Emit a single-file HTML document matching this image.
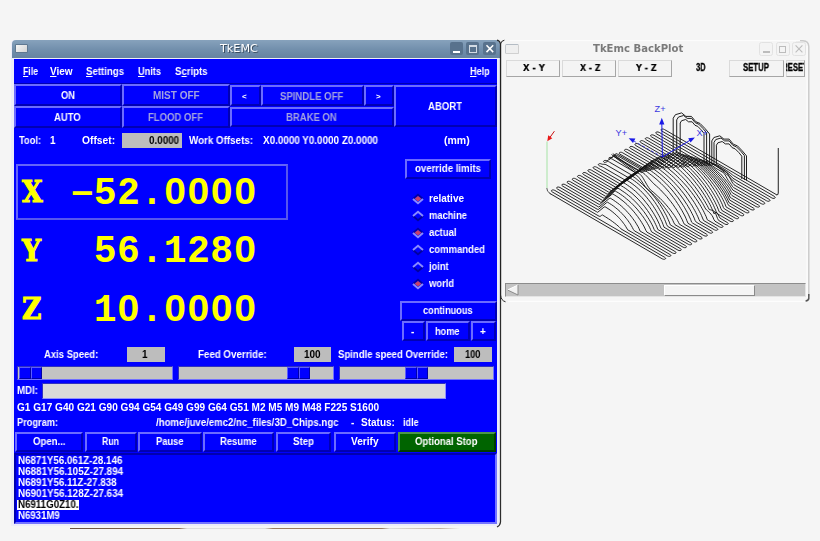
<!DOCTYPE html><html><head><meta charset="utf-8"><title>TkEMC</title><style>
html,body{margin:0;padding:0}
body{width:820px;height:541px;background:#f5f5f5;position:relative;overflow:hidden;font-family:"Liberation Sans",sans-serif;font-weight:bold;font-size:10px;color:#fff}
.a{position:absolute;box-sizing:border-box;white-space:nowrap}
.btn{position:absolute;box-sizing:border-box;background:#0000ff;border:2px solid;border-color:#6c6cff #0000b4 #0000b4 #6c6cff;text-align:center;white-space:nowrap;overflow:hidden}
.dis{color:#a3a3e0}
.val{position:absolute;box-sizing:border-box;background:#bdbdbd;color:#000;text-align:center}
.tr{position:absolute;box-sizing:border-box;background:#c3c3c3;border:1px solid;border-color:#3030c0 #7070ff #7070ff #3030c0}
.sl{position:absolute;box-sizing:border-box;background:#0000ff;border:1px solid;border-color:#5c5cff #0000a8 #0000a8 #5c5cff}
.big{position:absolute;font-family:"Liberation Mono",monospace;font-weight:bold;font-size:38px;color:#ffff00;white-space:pre;line-height:40px;letter-spacing:0.5px}
.ax{position:absolute;font-family:"DejaVu Serif",serif;font-weight:bold;font-size:29.5px;color:#ffff00;line-height:32px;transform:scaleX(0.9);transform-origin:0 0;-webkit-text-stroke:1.1px #ffff00}
.hy{display:inline-block;position:relative;top:-1.2px;transform:scale(1.78,0.82);transform-origin:50% 60%}
.t{position:absolute;white-space:pre;line-height:12px;transform-origin:0 0;will-change:transform}
.rb{position:absolute;box-sizing:border-box;background:#f4f4f4;border:1px solid;border-color:#dadada #a6a6a6 #a6a6a6 #dadada;color:#000;text-align:center;overflow:hidden;white-space:nowrap}
u{text-decoration:underline}
</style></head><body>
<div class="a" style="left:11px;top:40px;width:489px;height:486px;background:#ececfa;border-radius:4px 4px 4px 0"></div>
<div class="a" style="left:11.5px;top:40px;width:488.5px;height:18px;background:linear-gradient(#87a2bc,#7390ad 50%,#6583a1);border-radius:4px 4px 0 0"></div>
<div class="a" style="left:15px;top:44px;width:13px;height:9px;background:linear-gradient(135deg,#f6f6f6,#d4d4d4);border:1px solid #5f7891;border-radius:1px"></div>
<div class="t" style="left:219.5px;top:41.6px;font-family:'DejaVu Sans',sans-serif;font-weight:normal;font-size:11.2px;color:#fff;text-shadow:1px 1px 0 #3d4f62;line-height:14px">TkEMC</div>
<div class="a" style="left:449.7px;top:42.2px;width:13.3px;height:13.3px;background:#58728d;border-radius:2px"></div>
<div class="a" style="left:466.1px;top:42.2px;width:13.3px;height:13.3px;background:#58728d;border-radius:2px"></div>
<div class="a" style="left:482.8px;top:42.2px;width:13.3px;height:13.3px;background:#58728d;border-radius:2px"></div>
<div class="a" style="left:453px;top:50.6px;width:7px;height:2px;background:#fff"></div>
<div class="a" style="left:469px;top:45px;width:8px;height:8px;border:1px solid #d2dbe4;border-top-width:2px"></div>
<svg class="a" style="left:482.5px;top:42px" width="14" height="14"><path d="M3.5 3.3L10.2 10.1M10.2 3.3L3.5 10.1" stroke="#fff" stroke-width="1.5" fill="none"/></svg>
<div class="a" style="left:14px;top:58.7px;width:482.7px;height:464.8px;background:#0000ff"></div>
<div class="t " style="left:22.75px;top:66px;transform:scaleX(0.871);"><u>F</u>ile</div>
<div class="t " style="left:50.25px;top:66px;transform:scaleX(0.994);"><u>V</u>iew</div>
<div class="t " style="left:86.00px;top:66px;transform:scaleX(0.963);"><u>S</u>ettings</div>
<div class="t " style="left:137.75px;top:66px;transform:scaleX(0.920);"><u>U</u>nits</div>
<div class="t " style="left:174.50px;top:66px;transform:scaleX(0.959);">S<u>c</u>ripts</div>
<div class="t " style="left:469.50px;top:66px;transform:scaleX(0.911);"><u>H</u>elp</div>
<div class="a" style="left:14px;top:83px;width:483px;height:1px;background:#0000b4"></div>
<div class="btn " style="left:14px;top:84px;width:108px;height:22px;"></div>
<div class="t " style="left:60.50px;top:90.3px;transform:scaleX(0.933);">ON</div>
<div class="btn " style="left:14px;top:106px;width:108px;height:22px;"></div>
<div class="t " style="left:53.75px;top:111.8px;transform:scaleX(0.950);">AUTO</div>
<div class="btn " style="left:122px;top:84px;width:108px;height:22px;"></div>
<div class="t dis" style="left:152.50px;top:90.3px;transform:scaleX(0.991);">MIST OFF</div>
<div class="btn " style="left:122px;top:106px;width:108px;height:22px;"></div>
<div class="t dis" style="left:147.50px;top:111.8px;transform:scaleX(0.952);">FLOOD OFF</div>
<div class="btn " style="left:230px;top:85px;width:31px;height:21px;"></div>
<div class="t " style="left:242.31px;top:91.4px;transform:scaleX(1.000);font-size:8px;">&lt;</div>
<div class="btn " style="left:261px;top:85px;width:103px;height:21px;"></div>
<div class="t dis" style="left:280.00px;top:90.5px;transform:scaleX(0.957);">SPINDLE OFF</div>
<div class="btn " style="left:364px;top:85px;width:30px;height:21px;"></div>
<div class="t " style="left:375.61px;top:91.4px;transform:scaleX(1.000);font-size:8px;">&gt;</div>
<div class="btn " style="left:230px;top:107px;width:164px;height:20px;"></div>
<div class="t dis" style="left:286.25px;top:111.8px;transform:scaleX(0.951);">BRAKE ON</div>
<div class="btn " style="left:394px;top:85px;width:103px;height:42px;"></div>
<div class="t " style="left:428.00px;top:101.1px;transform:scaleX(0.956);">ABORT</div>
<div class="t " style="left:18.70px;top:135px;transform:scaleX(0.933);">Tool:</div>
<div class="t " style="left:49.72px;top:135px;transform:scaleX(1.000);">1</div>
<div class="t " style="left:81.80px;top:135px;transform:scaleX(1.027);">Offset:</div>
<div class="val" style="left:122px;top:133px;width:60px;height:15px"></div>
<div class="t " style="left:149.25px;top:135px;transform:scaleX(0.981);color:#000;">0.0000</div>
<div class="t " style="left:189.25px;top:135px;transform:scaleX(0.979);">Work Offsets:</div>
<div class="t " style="left:263.25px;top:135px;transform:scaleX(0.986);">X0.0000 Y0.0000 Z0.0000</div>
<div class="t " style="left:443.50px;top:135px;transform:scaleX(1.052);">(mm)</div>
<div class="a" style="left:16px;top:164px;width:272px;height:55.5px;border:2px solid;border-color:#6464f8 #5656ee #5656ee #6464f8"></div>
<div class="ax" style="left:21.5px;top:176.3px">X</div>
<div class="big" style="left:70.5px;top:173.5px"><span class="hy">-</span>52.0000</div>
<div class="a" style="left:172.6px;top:186.5px;width:5px;height:8px;background:#0000ff"></div>
<div class="a" style="left:195.9px;top:186.5px;width:5px;height:8px;background:#0000ff"></div>
<div class="a" style="left:219.2px;top:186.5px;width:5px;height:8px;background:#0000ff"></div>
<div class="a" style="left:242.5px;top:186.5px;width:5px;height:8px;background:#0000ff"></div>
<div class="ax" style="left:21.5px;top:234.8px">Y</div>
<div class="big" style="left:70.5px;top:232px"> 56.1280</div>
<div class="a" style="left:242.5px;top:245.0px;width:5px;height:8px;background:#0000ff"></div>
<div class="ax" style="left:21.5px;top:293.3px">Z</div>
<div class="big" style="left:70.5px;top:290.5px"> 10.0000</div>
<div class="a" style="left:126.0px;top:303.5px;width:5px;height:8px;background:#0000ff"></div>
<div class="a" style="left:172.6px;top:303.5px;width:5px;height:8px;background:#0000ff"></div>
<div class="a" style="left:195.9px;top:303.5px;width:5px;height:8px;background:#0000ff"></div>
<div class="a" style="left:219.2px;top:303.5px;width:5px;height:8px;background:#0000ff"></div>
<div class="a" style="left:242.5px;top:303.5px;width:5px;height:8px;background:#0000ff"></div>
<div class="btn " style="left:405px;top:159px;width:86px;height:20px;"></div>
<div class="t " style="left:414.60px;top:162.8px;transform:scaleX(0.964);">override limits</div>
<svg class="a" style="left:410.7px;top:192.7px" width="14" height="12"><path d="M2 6L7 1.7L12 6" stroke="#0000a6" stroke-width="1.7" fill="none"/><path d="M2 6L7 10.3L12 6" stroke="#8a8aff" stroke-width="1.9" fill="none"/><path d="M3.6 5.8L7 3L10.4 5.8L7 8.6Z" fill="#c8406a"/></svg>
<div class="t " style="left:428.60px;top:192.8px;transform:scaleX(0.991);">relative</div>
<svg class="a" style="left:410.7px;top:209.7px" width="14" height="12"><path d="M2 6L7 10.3L12 6" stroke="#0000a0" stroke-width="1.8" fill="none"/><path d="M2 6L7 1.7L12 6" stroke="#8a8aff" stroke-width="1.9" fill="none"/></svg>
<div class="t " style="left:428.60px;top:209.8px;transform:scaleX(0.934);">machine</div>
<svg class="a" style="left:410.7px;top:226.7px" width="14" height="12"><path d="M2 6L7 1.7L12 6" stroke="#0000a6" stroke-width="1.7" fill="none"/><path d="M2 6L7 10.3L12 6" stroke="#8a8aff" stroke-width="1.9" fill="none"/><path d="M3.6 5.8L7 3L10.4 5.8L7 8.6Z" fill="#c8406a"/></svg>
<div class="t " style="left:428.60px;top:226.8px;transform:scaleX(0.955);">actual</div>
<svg class="a" style="left:410.7px;top:243.7px" width="14" height="12"><path d="M2 6L7 10.3L12 6" stroke="#0000a0" stroke-width="1.8" fill="none"/><path d="M2 6L7 1.7L12 6" stroke="#8a8aff" stroke-width="1.9" fill="none"/></svg>
<div class="t " style="left:428.60px;top:243.8px;transform:scaleX(0.951);">commanded</div>
<svg class="a" style="left:410.7px;top:260.7px" width="14" height="12"><path d="M2 6L7 10.3L12 6" stroke="#0000a0" stroke-width="1.8" fill="none"/><path d="M2 6L7 1.7L12 6" stroke="#8a8aff" stroke-width="1.9" fill="none"/></svg>
<div class="t " style="left:428.75px;top:260.8px;transform:scaleX(0.927);">joint</div>
<svg class="a" style="left:410.7px;top:277.7px" width="14" height="12"><path d="M2 6L7 1.7L12 6" stroke="#0000a6" stroke-width="1.7" fill="none"/><path d="M2 6L7 10.3L12 6" stroke="#8a8aff" stroke-width="1.9" fill="none"/><path d="M3.6 5.8L7 3L10.4 5.8L7 8.6Z" fill="#c8406a"/></svg>
<div class="t " style="left:428.63px;top:277.8px;transform:scaleX(0.942);">world</div>
<div class="btn " style="left:400px;top:301.4px;width:97px;height:19.6px;"></div>
<div class="t " style="left:422.90px;top:305.2px;transform:scaleX(0.921);">continuous</div>
<div class="btn " style="left:402px;top:321.3px;width:23px;height:20px;"></div>
<div class="t " style="left:410.69px;top:325.8px;transform:scaleX(1.000);">-</div>
<div class="btn " style="left:426px;top:321.3px;width:44px;height:20px;"></div>
<div class="t " style="left:434.80px;top:325.8px;transform:scaleX(0.922);">home</div>
<div class="btn " style="left:471px;top:321.3px;width:25px;height:20px;"></div>
<div class="t " style="left:479.88px;top:325.8px;transform:scaleX(1.000);">+</div>
<div class="t " style="left:43.75px;top:349px;transform:scaleX(0.948);">Axis Speed:</div>
<div class="val" style="left:127px;top:347px;width:38px;height:15px"></div>
<div class="t " style="left:141.59px;top:349px;transform:scaleX(1.000);color:#000;">1</div>
<div class="t " style="left:197.50px;top:349px;transform:scaleX(0.974);">Feed Override:</div>
<div class="val" style="left:294px;top:347px;width:37px;height:15px"></div>
<div class="t " style="left:303.75px;top:349px;transform:scaleX(0.974);color:#000;">100</div>
<div class="t " style="left:338.00px;top:349px;transform:scaleX(0.956);">Spindle speed Override:</div>
<div class="val" style="left:454px;top:347px;width:38px;height:15px"></div>
<div class="t " style="left:465.00px;top:349px;transform:scaleX(0.929);color:#000;">100</div>
<div class="tr" style="left:17px;top:366px;width:156px;height:14px"></div>
<div class="sl" style="left:19px;top:367px;width:11.5px;height:12px"></div>
<div class="sl" style="left:30.5px;top:367px;width:11.5px;height:12px"></div>
<div class="tr" style="left:178px;top:366px;width:156px;height:14px"></div>
<div class="sl" style="left:287px;top:367px;width:11.5px;height:12px"></div>
<div class="sl" style="left:298.5px;top:367px;width:11.5px;height:12px"></div>
<div class="tr" style="left:339px;top:366px;width:155px;height:14px"></div>
<div class="sl" style="left:405px;top:367px;width:11.5px;height:12px"></div>
<div class="sl" style="left:416.5px;top:367px;width:11.5px;height:12px"></div>
<div class="t " style="left:17.00px;top:385px;transform:scaleX(0.970);">MDI:</div>
<div class="a" style="left:42px;top:383px;width:404px;height:15.5px;background:#d9d9d9;border:1px solid;border-color:#3030c0 #9090ff #9090ff #3030c0"></div>
<div class="t " style="left:17.00px;top:401.8px;transform:scaleX(1.007);">G1 G17 G40 G21 G90 G94 G54 G49 G99 G64 G51 M2 M5 M9 M48 F225 S1600</div>
<div class="t " style="left:17.00px;top:416.9px;transform:scaleX(0.922);">Program:</div>
<div class="t " style="left:156.25px;top:416.9px;transform:scaleX(0.960);">/home/juve/emc2/nc_files/3D_Chips.ngc</div>
<div class="t " style="left:350.71px;top:416.9px;transform:scaleX(1.000);">-</div>
<div class="t " style="left:361.25px;top:416.9px;transform:scaleX(0.996);">Status:</div>
<div class="t " style="left:402.50px;top:416.9px;transform:scaleX(0.900);">idle</div>
<div class="btn " style="left:15px;top:432px;width:68px;height:20px;"></div>
<div class="t " style="left:32.50px;top:436.4px;transform:scaleX(0.959);">Open...</div>
<div class="btn " style="left:85px;top:432px;width:52px;height:20px;"></div>
<div class="t " style="left:101.75px;top:436.4px;transform:scaleX(0.874);">Run</div>
<div class="btn " style="left:138px;top:432px;width:64px;height:20px;"></div>
<div class="t " style="left:155.50px;top:436.4px;transform:scaleX(0.933);">Pause</div>
<div class="btn " style="left:203px;top:432px;width:71px;height:20px;"></div>
<div class="t " style="left:219.50px;top:436.4px;transform:scaleX(0.944);">Resume</div>
<div class="btn " style="left:276px;top:432px;width:55px;height:20px;"></div>
<div class="t " style="left:293.25px;top:436.4px;transform:scaleX(0.969);">Step</div>
<div class="btn " style="left:334px;top:432px;width:62px;height:20px;"></div>
<div class="t " style="left:350.50px;top:436.4px;transform:scaleX(1.010);">Verify</div>
<div class="btn " style="left:398px;top:432px;width:98px;height:20px;background:#006400;border-color:#4c964c #003c00 #003c00 #4c964c"></div>
<div class="t " style="left:415.00px;top:436.4px;transform:scaleX(0.953);">Optional Stop</div>
<div class="a" style="left:14px;top:453px;width:482.7px;height:70.5px;border:2px solid;border-color:#0000b0 #7474ff #7474ff #0000b0"></div>
<div class="t " style="left:17.50px;top:455.1px;transform:scaleX(0.977);">N6871Y56.061Z-28.146</div>
<div class="t " style="left:17.50px;top:466.1px;transform:scaleX(0.984);">N6881Y56.105Z-27.894</div>
<div class="t " style="left:17.50px;top:477.1px;transform:scaleX(0.981);">N6891Y56.11Z-27.838</div>
<div class="t " style="left:17.50px;top:488.1px;transform:scaleX(0.984);">N6901Y56.128Z-27.634</div>
<div class="a" style="left:17px;top:500px;width:62px;height:10px;background:#fff"></div>
<div class="t " style="left:17.50px;top:499px;transform:scaleX(0.972);color:#000;">N6911G0Z10.</div>
<div class="t " style="left:17.50px;top:510.1px;transform:scaleX(0.963);">N6931M9</div>
<div class="a" style="left:70px;top:528px;width:390px;height:1px;background:linear-gradient(90deg,#6a5040,#8a6a50 28%,#ddd 30%,#ddd 50%,#9a7a60 52%,#9a7a60 80%,#ddd 82%,#c0b0a0 95%,#f5f5f5)"></div>
<svg class="a" style="left:494px;top:36px" width="16" height="496"><path d="M3 4.2Q6 4.8 6.5 8L6.5 486Q6.3 489.5 3 491" stroke="#2c2c2c" stroke-width="1.25" fill="none"/><path d="M10.4 4.2Q7 4.8 6.6 8L6.6 259Q7 264.5 11.5 265.8" stroke="#222" stroke-width="1" fill="none"/></svg>
<svg class="a" style="left:500px;top:36px" width="316" height="272"><path d="M296 4.6L303 4.8Q308.6 5 308.8 10.5L308.8 260" stroke="#c9c9c9" stroke-width="1.4" fill="none"/><path d="M308.8 258L308.8 262.5Q308.4 264.6 305.6 265" stroke="#555" stroke-width="1.5" fill="none"/><path d="M8 265.3L305 265.3" stroke="#fdfdfd" stroke-width="1.2" fill="none"/><path d="M10 4.6L300 4.6" stroke="#fcfcfc" stroke-width="1.2" fill="none"/><path d="M307 10L307 262" stroke="#fbfbfb" stroke-width="1.6" fill="none"/></svg>
<div class="a" style="left:505px;top:44px;width:13.5px;height:9.6px;background:#efefef;border:1px solid;border-color:#b4bcc4 #d0d0d0 #d0d0d0 #c4c8cc;border-radius:1.5px"></div>
<div class="t" style="left:593px;top:42px;font-family:'DejaVu Sans',sans-serif;font-size:10.1px;color:#7a7a7a;line-height:14px">TkEmc BackPlot</div>
<div class="a" style="left:759px;top:42px;width:14px;height:14px;border:1px solid #e2e2e2;border-radius:2.5px;background:#f4f4f4"></div>
<div class="a" style="left:775.5px;top:42px;width:14px;height:14px;border:1px solid #e2e2e2;border-radius:2.5px;background:#f4f4f4"></div>
<div class="a" style="left:792px;top:42px;width:14px;height:14px;border:1px solid #e2e2e2;border-radius:2.5px;background:#f4f4f4"></div>
<div class="a" style="left:762.5px;top:51px;width:7px;height:1.5px;background:#bcbcbc"></div>
<div class="a" style="left:779px;top:45.5px;width:7px;height:7px;border:1px solid #bcbcbc;border-top-width:1.5px"></div>
<svg class="a" style="left:792px;top:42px" width="14" height="14"><path d="M3.6 3.4L10.4 10.4M10.4 3.4L3.6 10.4" stroke="#bcbcbc" stroke-width="1.1" fill="none"/></svg>
<div class="rb" style="left:505.5px;top:59.5px;width:54px;height:17px"></div>
<div class="t" style="left:523.00px;top:62.2px;transform:scaleX(0.985);font-family:'DejaVu Sans',sans-serif;font-size:8.5px;color:#000;-webkit-text-stroke:0.2px #000;">X - Y</div>
<div class="rb" style="left:561.5px;top:59.5px;width:54.5px;height:17px"></div>
<div class="t" style="left:580.00px;top:62.2px;transform:scaleX(0.925);font-family:'DejaVu Sans',sans-serif;font-size:8.5px;color:#000;-webkit-text-stroke:0.2px #000;">X - Z</div>
<div class="rb" style="left:618px;top:59.5px;width:54.4px;height:17px"></div>
<div class="t" style="left:635.68px;top:62.2px;transform:scaleX(0.956);font-family:'DejaVu Sans',sans-serif;font-size:8.5px;color:#000;-webkit-text-stroke:0.2px #000;">Y - Z</div>
<div class="t " style="left:695.90px;top:61.8px;transform:scaleX(0.759);color:#000;-webkit-text-stroke:0.3px #000;">3D</div>
<div class="rb" style="left:729px;top:59.5px;width:54.7px;height:17px"></div>
<div class="t " style="left:742.70px;top:61.8px;transform:scaleX(0.777);color:#000;-webkit-text-stroke:0.3px #000;">SETUP</div>
<div class="rb" style="left:785.6px;top:59.5px;width:19.6px;height:17px"></div>
<div class="a" style="left:786.4px;top:60px;width:18px;height:16px;overflow:hidden">
<div class="t " style="left:-4.10px;top:1.8px;transform:scaleX(0.777);color:#000;-webkit-text-stroke:0.3px #000;">RESET</div>
</div>
<div class="a" style="left:505px;top:283px;width:301px;height:14px;background:#c3c3c3;border:1px solid;border-color:#8c8c8c #e4e4e4 #e4e4e4 #8c8c8c"></div>
<div class="a" style="left:664px;top:285px;width:90.5px;height:10.5px;background:#f4f4f4;border:1px solid;border-color:#fff #8a8a8a #8a8a8a #fff"></div>
<svg class="a" style="left:506px;top:284px" width="14" height="12"><path d="M1.5 6L12 1L12 11Z" fill="#f2f2f2"/><path d="M1.5 6L12 1" fill="none" stroke="#fff" stroke-width="1"/><path d="M12 1L12 11L1.5 6" fill="none" stroke="#8a8a8a" stroke-width="1"/></svg>
<svg class="a" style="left:500px;top:78px" width="308" height="204" viewBox="500 78 308 204">
<path d="M547 141.5L547 188" fill="none" stroke="#cdeccd" stroke-width="2"/>
<path d="M546.8 188Q546.6 191.6 550.5 193.8" fill="none" stroke="#444" stroke-width="0.9"/>
<path d="M554.4 131.2L549.5 138" stroke="#c81010" stroke-width="1" fill="none"/><path d="M547.3 141.3L548.2 135.2L552.3 138.3Z" fill="#e81818"/>
<path d="M549.6 193.3L662.2 258.8C664.4 260.1 667.1 258.7 664.8 257.4L552.2 191.9C550.0 190.6 552.6 189.1 554.8 190.4L599.2 216.3 600.3 216.3 601.3 215.5 602.3 214.9 605.4 216.8 608.5 218.8 610.6 220.2 612.7 221.7 614.7 223.2 616.8 224.9 618.9 226.7 619.9 227.7 620.9 228.8 622.0 229.5 667.4 255.9C669.7 257.2 672.3 255.8 670.0 254.5L627.7 229.8 625.6 226.3 624.6 224.7 623.5 223.3 622.5 221.9 621.5 220.7 620.4 219.4 619.4 218.3 618.4 217.2 616.3 215.1 614.2 213.3 612.2 211.6 610.1 210.0 608.0 208.6 606.0 207.3 604.9 206.7 603.9 207.2 597.7 212.3 596.7 211.8 557.4 189.0C555.2 187.7 557.8 186.2 560.0 187.5L597.2 209.2 598.3 209.5 606.5 202.7 607.6 202.2 609.6 203.5 611.7 204.8 613.8 206.3 615.8 207.9 617.9 209.6 620.0 211.5 622.0 213.6 624.1 215.8 625.1 217.0 626.2 218.3 627.2 219.6 628.2 220.9 629.2 222.4 630.3 223.9 631.3 225.6 632.3 227.4 633.4 229.5 634.4 230.8 672.6 253.0C674.9 254.3 677.5 252.9 675.2 251.6L640.1 231.1 639.1 228.7 638.1 226.7 637.0 224.9 636.0 223.2 635.0 221.6 633.9 220.1 632.9 218.7 631.9 217.3 630.8 216.0 629.8 214.7 627.7 212.4 625.7 210.2 623.6 208.1 621.5 206.2 619.5 204.5 617.4 202.9 615.3 201.4 613.3 200.0 611.2 198.7 610.2 198.1 609.1 198.6 598.8 207.1 562.6 186.1C560.4 184.8 563.0 183.3 565.3 184.7L599.3 204.5 600.4 203.8 611.7 194.5 612.8 193.9 614.8 195.2 616.9 196.5 619.0 197.9 621.0 199.5 623.1 201.1 625.2 202.9 627.2 204.7 629.3 206.8 631.4 208.9 633.4 211.2 635.5 213.7 636.5 215.1 637.6 216.4 638.6 217.9 639.6 219.3 640.7 220.9 641.7 222.5 642.7 224.2 643.8 226.0 644.8 228.0 645.8 230.3 646.9 232.1 677.9 250.1C680.1 251.4 682.7 250.0 680.5 248.7L651.5 231.8 650.5 229.4 649.5 227.2 648.4 225.2 647.4 223.4 646.4 221.7 645.3 220.1 644.3 218.5 643.3 217.0 642.2 215.6 641.2 214.2 639.1 211.6 637.1 209.1 635.0 206.8 632.9 204.6 630.9 202.6 628.8 200.7 626.7 199.0 624.7 197.3 622.6 195.7 620.5 194.3 618.5 192.9 616.4 191.7 615.4 191.1 614.3 191.6 602.0 201.8 600.9 202.4 567.9 183.2C565.6 181.9 568.2 180.4 570.5 181.8L602.5 200.4 603.5 199.8 617.0 188.7 618.0 188.2 620.1 189.4 622.1 190.8 624.2 192.2 626.3 193.7 628.3 195.3 630.4 197.0 632.5 198.9 634.5 200.9 636.6 203.0 638.7 205.3 640.7 207.7 642.8 210.3 643.8 211.6 644.9 213.0 645.9 214.5 646.9 216.0 647.9 217.6 649.0 219.3 650.0 221.0 651.0 222.8 652.1 224.8 653.1 226.9 654.1 229.4 655.2 231.0 683.1 247.2C685.3 248.5 687.9 247.1 685.7 245.8L657.8 229.5 656.8 226.8 655.7 224.5 654.7 222.4 653.7 220.4 652.6 218.6 651.6 216.8 650.6 215.1 649.5 213.5 648.5 212.0 647.5 210.5 646.4 209.0 644.4 206.3 642.3 203.8 640.2 201.4 638.2 199.2 636.1 197.1 634.0 195.2 632.0 193.3 629.9 191.7 627.8 190.1 625.8 188.6 623.7 187.2 621.6 186.0 620.6 185.3 619.6 185.9 605.1 197.8 604.1 198.3 573.1 180.3C570.8 179.0 573.4 177.5 575.7 178.8L605.6 196.3 606.7 195.8 622.2 183.0 623.2 182.5 625.3 183.7 627.3 185.1 629.4 186.5 631.5 188.0 633.5 189.7 635.6 191.4 637.7 193.3 639.7 195.4 641.8 197.5 643.9 199.9 645.9 202.4 648.0 205.0 649.0 206.4 650.1 207.9 651.1 209.4 652.1 211.0 653.2 212.6 654.2 214.3 655.2 216.1 656.3 218.0 657.3 219.9 658.3 222.0 659.4 224.3 660.4 227.0 661.4 228.7 688.3 244.3C690.5 245.6 693.1 244.2 690.9 242.9L664.0 227.2 663.0 224.4 662.0 221.8 660.9 219.6 659.9 217.4 658.9 215.5 657.8 213.6 656.8 211.8 655.8 210.1 654.7 208.4 653.7 206.8 652.7 205.3 651.6 203.8 650.6 202.4 648.5 199.7 646.5 197.2 644.4 194.8 642.3 192.6 640.3 190.5 638.2 188.6 636.1 186.8 634.1 185.2 632.0 183.6 630.0 182.2 627.9 180.9 625.8 179.6 624.8 180.2 608.3 193.7 607.2 194.2 578.3 177.4C576.1 176.1 578.7 174.6 580.9 175.9L608.8 192.2 609.8 192.0 627.4 177.5 628.4 177.0 630.5 178.3 632.6 179.6 634.6 181.0 636.7 182.6 638.8 184.3 640.8 186.1 642.9 188.0 645.0 190.1 647.0 192.3 649.1 194.7 651.2 197.2 653.2 199.9 654.3 201.4 655.3 202.8 656.3 204.4 657.4 206.0 658.4 207.6 659.4 209.4 660.5 211.2 661.5 213.0 662.5 215.0 663.6 217.1 664.6 219.4 665.6 221.8 666.7 224.7 667.7 226.4 693.5 241.4C695.8 242.7 698.4 241.3 696.1 240.0L670.3 224.9 669.3 222.1 668.2 219.6 667.2 217.3 666.2 215.2 665.1 213.3 664.1 211.4 663.1 209.6 662.0 207.9 661.0 206.2 660.0 204.6 658.9 203.1 657.9 201.6 655.8 198.8 653.8 196.2 651.7 193.7 649.6 191.4 647.6 189.3 645.5 187.3 642.4 184.4 639.3 181.4 637.2 179.6 636.2 178.7 635.2 177.9 634.1 177.2 632.1 175.9 631.0 175.3 630.0 175.8 612.4 190.3 611.4 190.7 583.5 174.5C581.3 173.2 583.9 171.7 586.1 173.0L614.0 189.3 615.1 188.6 632.6 174.1 633.6 173.6 635.7 174.8 636.7 175.5 637.8 176.3 638.8 177.4 639.8 178.7 640.9 180.2 644.0 184.9 645.0 186.4 646.0 187.7 647.1 188.9 650.2 191.6 652.2 193.5 654.3 195.5 656.4 197.7 658.4 199.9 660.5 202.3 662.6 204.8 664.6 207.5 665.7 208.9 666.7 210.4 667.7 211.9 668.8 213.4 669.8 215.1 670.8 216.8 671.9 218.6 672.9 220.6 673.9 222.8 675.0 224.7 698.7 238.5C701.0 239.8 703.6 238.4 701.3 237.1L679.6 224.4 678.6 222.6 677.6 220.6 676.5 218.8 675.5 217.2 674.5 215.6 673.4 214.1 672.4 212.7 670.3 209.9 668.3 207.4 666.2 204.9 664.1 202.6 662.1 200.4 660.0 198.3 657.9 196.4 655.9 194.5 653.8 192.6 650.7 190.1 649.7 188.9 648.7 187.5 647.6 185.9 646.6 184.2 644.5 180.6 643.5 178.8 642.5 177.2 641.4 175.7 640.4 174.6 639.4 173.8 637.3 172.5 636.3 171.9 635.2 172.4 616.6 187.7 615.6 187.2 588.7 171.6C586.5 170.3 589.1 168.8 591.3 170.1L618.2 185.8 619.2 186.0 637.8 170.7 638.9 170.1 642.0 172.0 643.0 172.7 644.0 173.5 645.1 174.5 646.1 175.5 648.2 177.7 651.3 181.1 652.3 182.2 653.3 183.3 656.4 186.0 658.5 187.9 660.6 189.9 662.6 192.1 664.7 194.3 666.8 196.6 668.8 199.1 670.9 201.7 673.0 204.5 675.0 207.5 676.1 209.0 677.1 210.6 678.1 212.3 679.2 214.0 680.2 215.8 681.2 217.7 682.3 219.8 683.3 222.2 684.3 224.2 703.9 235.6C706.2 236.9 708.8 235.5 706.6 234.2L688.0 223.3 686.9 220.7 685.9 218.2 684.9 216.0 683.8 214.0 682.8 212.1 681.8 210.3 680.7 208.5 679.7 206.8 678.7 205.2 677.6 203.6 675.6 200.5 673.5 197.7 671.4 195.0 669.4 192.4 667.3 190.0 665.2 187.7 663.2 185.6 661.1 183.5 659.0 181.6 657.0 179.7 653.9 177.1 651.8 175.4 649.7 173.8 647.7 172.3 645.6 170.9 643.5 169.6 641.5 168.3 640.4 168.9 621.8 184.1 620.8 184.3 594.0 168.7C591.7 167.4 594.3 165.9 596.6 167.2L600.7 169.6 623.4 182.8 624.5 182.3 643.0 167.0 644.1 166.5 647.2 168.4 649.2 169.7 651.3 171.1 653.4 172.6 655.4 174.1 657.5 175.8 659.6 177.5 661.6 179.3 663.7 181.3 665.8 183.3 667.8 185.4 669.9 187.7 672.0 190.0 674.0 192.5 676.1 195.2 678.2 197.9 680.2 200.9 682.3 204.0 683.3 205.6 684.4 207.3 685.4 209.1 686.4 210.9 687.5 212.8 688.5 214.8 689.5 217.0 690.6 219.3 691.6 222.2 692.6 223.1 709.2 232.7C711.4 234.0 714.0 232.6 711.8 231.2L696.3 222.2 695.2 220.7 694.2 218.1 693.2 215.8 692.1 213.7 691.1 211.7 690.1 209.8 689.0 208.0 688.0 206.3 687.0 204.6 685.9 203.0 683.9 199.9 681.8 197.0 679.7 194.2 677.7 191.6 675.6 189.1 673.6 186.7 671.5 184.5 669.4 182.3 667.4 180.3 665.3 178.3 663.2 176.5 661.2 174.7 659.1 173.1 657.0 171.5 655.0 170.0 652.9 168.6 650.8 167.2 647.7 165.3 646.7 164.7 645.7 165.2 627.1 180.5 626.0 180.6 604.3 168.0 603.3 167.4 602.3 166.9 600.2 166.1 599.2 165.7C596.9 164.4 599.5 162.8 601.8 164.1L602.8 164.3 603.8 164.3 604.9 164.4 605.9 164.6 629.7 178.4 630.7 177.9 648.3 163.4 649.3 162.9 652.4 164.7 654.5 166.1 656.5 167.4 658.6 168.9 660.7 170.4 662.7 172.0 664.8 173.7 666.9 175.5 668.9 177.3 671.0 179.3 673.1 181.3 675.1 183.5 677.2 185.8 679.3 188.1 681.3 190.6 683.4 193.2 685.5 196.0 687.5 198.9 689.6 202.0 690.6 203.6 691.7 205.2 692.7 206.9 693.7 208.7 694.8 210.6 695.8 212.5 696.8 214.6 697.9 216.8 698.9 219.3 699.9 221.4 714.4 229.8C716.6 231.1 719.2 229.7 717.0 228.3L703.6 220.5 702.5 218.0 701.5 215.6 700.5 213.4 699.4 211.4 698.4 209.5 697.4 207.6 696.3 205.9 695.3 204.2 694.3 202.5 692.2 199.4 690.1 196.4 688.1 193.6 686.0 190.9 683.9 188.4 681.9 186.0 679.8 183.7 677.7 181.4 675.7 179.3 673.6 177.3 671.5 175.4 669.5 173.6 667.4 171.8 665.3 170.1 663.3 168.6 661.2 167.1 659.1 165.6 656.0 163.6 652.9 161.7 651.9 161.1 650.9 161.6 634.3 175.2 633.3 176.0 609.6 162.2 608.5 161.6 607.5 161.5 606.5 161.9 605.4 162.3 604.4 162.5C602.1 161.2 604.8 159.6 607.0 160.9L608.0 160.3 609.1 159.4 610.1 158.7 611.1 158.6 612.2 159.1 635.9 172.9 637.0 173.4 653.5 159.8 654.5 159.3 657.6 161.1 660.7 163.1 662.8 164.5 664.8 166.0 666.9 167.5 669.0 169.1 671.0 170.8 673.1 172.5 675.2 174.4 677.2 176.3 679.3 178.4 681.4 180.5 683.4 182.7 685.5 185.0 687.6 187.4 689.6 190.0 691.7 192.6 693.8 195.5 695.8 198.4 697.9 201.5 698.9 203.1 700.0 204.8 701.0 206.6 702.0 208.4 703.1 210.3 704.1 212.3 705.1 214.4 706.2 216.7 707.2 219.6 708.2 220.3 719.6 226.9C721.8 228.2 724.5 226.8 722.2 225.5L715.0 221.2 713.9 219.5 712.9 217.0 711.9 215.4 710.8 214.0 709.8 212.8 708.8 211.8 707.7 210.9 706.7 210.1 705.7 209.0 704.6 207.1 703.6 205.2 702.6 203.4 701.5 201.7 700.5 200.0 698.4 196.9 696.4 193.9 694.3 191.0 692.3 188.3 690.2 185.7 688.1 183.3 686.1 180.9 684.0 178.7 681.9 176.5 679.9 174.5 677.8 172.5 675.7 170.7 673.7 168.9 671.6 167.2 669.5 165.6 667.5 164.1 665.4 162.6 663.3 161.2 660.2 159.3 658.2 158.0 657.1 157.8 641.6 170.6 640.6 171.4 614.8 156.3 613.7 155.8 612.7 156.2 611.7 157.2 610.6 158.4 609.6 159.3C607.4 158.0 610.0 156.5 612.2 157.8L613.3 156.7 614.3 155.3 615.3 154.1 616.4 153.6 617.4 154.1 643.2 169.1 644.2 169.5 659.7 156.7 660.8 156.2 663.9 158.1 665.9 159.4 668.0 160.8 670.1 162.2 672.1 163.8 674.2 165.4 676.3 167.1 678.3 168.8 680.4 170.7 682.5 172.7 684.5 174.7 686.6 176.9 688.7 179.1 690.7 181.5 692.8 184.0 694.9 186.6 696.9 189.4 699.0 192.3 701.1 195.3 702.1 196.9 703.1 198.6 704.2 200.3 705.2 202.0 706.2 203.8 707.3 205.7 708.3 207.7 709.3 209.6 710.4 209.8 711.4 210.1 712.4 210.4 713.5 210.9 714.5 211.5 715.5 213.2 717.6 218.6 718.6 220.4 724.8 224.0C727.1 225.3 729.7 223.9 727.4 222.6L721.2 218.9 720.2 218.3 719.2 216.6 718.1 214.4 717.1 212.7 716.1 212.3 715.0 212.9 714.0 213.8 713.0 211.1 711.9 208.7 710.9 206.5 709.9 204.4 708.8 202.5 707.8 200.6 706.8 198.8 705.7 197.1 704.7 195.4 702.6 192.2 700.6 189.2 698.5 186.3 696.4 183.6 694.4 181.0 692.3 178.5 690.2 176.2 688.2 174.0 686.1 171.8 684.0 169.8 682.0 167.9 679.9 166.1 677.8 164.3 675.8 162.7 673.7 161.1 671.6 159.6 669.6 158.2 667.5 156.9 664.4 155.0 663.4 154.8 641.7 172.6 640.7 172.1 614.8 157.1C612.6 155.8 615.2 154.3 617.4 155.6L644.3 171.3 645.3 171.4 666.0 154.5 667.0 154.0 670.1 155.8 672.2 157.2 674.3 158.5 676.3 160.0 678.4 161.6 680.5 163.2 682.5 164.9 684.6 166.7 686.6 168.6 688.7 170.7 690.8 172.8 692.8 175.0 694.9 177.3 697.0 179.8 699.0 182.4 701.1 185.1 703.2 188.0 705.2 191.0 706.3 192.6 707.3 194.2 708.3 195.9 709.4 197.7 710.4 199.5 711.4 201.4 712.5 203.4 713.5 205.4 714.5 207.7 715.6 210.1 716.6 213.2 717.6 213.9 730.0 221.1C732.3 222.4 734.9 221.0 732.6 219.7L719.2 211.8 718.2 209.2 717.2 206.7 716.1 204.4 715.1 202.3 714.1 200.4 713.0 198.5 712.0 196.6 711.0 194.9 709.9 193.2 708.9 191.6 706.8 188.5 704.8 185.5 702.7 182.7 700.6 180.1 698.6 177.6 696.5 175.2 694.4 172.9 692.4 170.7 690.3 168.7 688.2 166.7 686.2 164.9 684.1 163.1 682.0 161.5 680.0 159.9 677.9 158.4 675.8 157.0 673.8 155.7 670.7 153.8 669.6 153.5 649.0 170.5 647.9 170.4 620.0 154.2C617.8 152.9 620.4 151.4 622.7 152.8L651.6 169.6 652.6 169.6 672.2 153.5 673.3 153.0 676.4 154.9 678.4 156.2 680.5 157.6 682.6 159.1 684.6 160.6 686.7 162.3 688.8 164.0 690.8 165.8 692.9 167.8 695.0 169.8 697.0 171.9 699.1 174.2 701.2 176.6 703.2 179.1 705.3 181.7 707.4 184.5 709.4 187.4 711.5 190.5 712.5 192.2 713.6 193.9 714.6 195.6 715.6 197.4 716.7 199.3 717.7 201.3 718.7 203.4 719.8 205.7 720.8 208.3 721.8 210.4 735.3 218.2C737.5 219.5 740.1 218.1 737.9 216.8L724.4 208.9 723.4 207.5 722.4 204.7 721.3 202.4 720.3 200.3 719.3 198.3 718.2 196.4 717.2 194.6 716.2 192.8 715.1 191.1 714.1 189.5 712.0 186.4 710.0 183.4 707.9 180.7 705.8 178.1 703.8 175.6 701.7 173.2 699.6 171.0 697.6 168.8 695.5 166.8 693.4 164.9 691.4 163.1 689.3 161.4 687.2 159.7 685.2 158.2 683.1 156.7 681.0 155.4 679.0 154.0 676.9 152.8 675.9 152.6 656.3 168.7 655.2 168.7 625.3 151.3C623.0 150.0 625.6 148.5 627.9 149.8L659.9 168.5 660.9 168.2 678.5 153.7 679.5 153.3 682.6 155.1 684.7 156.5 686.8 157.8 688.8 159.3 690.9 160.9 693.0 162.5 695.0 164.2 697.1 166.1 699.2 168.0 701.2 170.0 703.3 172.1 705.3 174.4 707.4 176.7 709.5 179.2 711.5 181.8 713.6 184.6 715.7 187.5 716.7 189.0 717.7 190.6 718.8 192.3 719.8 194.0 720.8 195.7 721.9 197.6 722.9 199.5 723.9 201.6 725.0 203.9 726.0 206.8 727.0 207.5 740.5 215.3C742.7 216.6 745.3 215.2 743.1 213.8L728.6 205.4 727.6 203.6 726.6 201.3 725.5 199.2 724.5 197.2 723.5 195.4 722.4 193.7 721.4 192.0 720.4 190.4 719.3 188.8 717.3 185.9 715.2 183.1 713.1 180.5 711.1 178.0 709.0 175.6 706.9 173.4 704.9 171.2 702.8 169.2 700.7 167.3 698.7 165.4 696.6 163.7 694.5 162.1 692.5 160.5 690.4 159.0 688.3 157.6 686.3 156.3 683.2 154.4 682.1 154.1 665.6 167.7 664.6 168.2 630.5 148.4C628.2 147.1 630.8 145.6 633.1 146.9L669.2 168.0 670.3 167.3 684.7 155.4 685.8 154.9 688.9 156.8 690.9 158.1 693.0 159.5 695.1 161.0 697.1 162.5 699.2 164.2 701.3 165.9 703.3 167.7 705.4 169.7 707.5 171.7 709.5 173.8 711.6 176.1 713.7 178.5 715.7 181.0 717.8 183.7 719.9 186.5 720.9 188.0 721.9 189.6 723.0 191.2 724.0 192.8 725.0 194.6 726.1 196.5 727.1 198.4 728.1 200.7 729.2 202.8 745.7 212.4C747.9 213.7 750.5 212.3 748.3 210.9L729.7 200.1 728.7 197.8 727.6 195.7 726.6 193.8 725.6 192.0 724.5 190.4 723.5 188.8 722.5 187.2 721.4 185.8 719.4 182.9 717.3 180.3 715.2 177.8 713.2 175.5 711.1 173.3 709.0 171.2 707.0 169.2 704.9 167.3 702.8 165.6 700.8 163.9 698.7 162.3 696.6 160.8 694.6 159.4 692.5 158.0 689.4 156.1 688.4 155.9 675.0 166.9 673.9 167.7 635.7 145.5C633.5 144.2 636.1 142.7 638.3 144.0L677.6 166.9 678.6 167.4 691.0 157.2 692.0 156.8 695.1 158.7 697.2 160.0 699.3 161.4 701.3 162.9 703.4 164.5 705.5 166.1 707.5 167.9 709.6 169.8 711.7 171.7 713.7 173.8 715.8 176.1 717.9 178.4 719.9 180.9 722.0 183.6 723.0 185.0 724.1 186.4 725.1 188.0 726.1 189.5 727.1 191.2 728.2 193.0 729.2 195.0 730.2 197.4 731.3 198.1 750.9 209.5C753.2 210.8 755.8 209.4 753.5 208.1L731.8 195.4 730.8 194.3 729.8 192.2 728.7 190.4 727.7 188.7 726.7 187.1 725.6 185.6 724.6 184.2 723.6 182.8 721.5 180.2 719.4 177.8 717.4 175.5 715.3 173.3 713.2 171.3 711.2 169.4 709.1 167.6 707.0 165.9 705.0 164.3 702.9 162.7 700.8 161.3 698.8 160.0 695.7 158.1 694.6 157.8 683.3 167.1 682.2 166.6 640.9 142.6C638.7 141.3 641.3 139.8 643.5 141.1L686.9 166.4 687.9 166.8 697.2 159.2 698.3 158.7 701.4 160.6 703.4 161.9 705.5 163.3 707.6 164.8 709.6 166.4 711.7 168.1 713.8 169.9 715.8 171.8 717.9 173.8 720.0 176.0 722.0 178.3 724.1 180.7 725.1 182.0 726.2 183.4 727.2 184.8 728.2 186.2 729.3 187.8 730.3 189.5 731.3 191.4 732.4 192.8 756.1 206.6C758.4 207.9 761.0 206.5 758.7 205.2L732.9 190.1 731.9 188.6 730.8 186.9 729.8 185.3 728.8 183.9 727.7 182.5 726.7 181.2 724.6 178.7 722.6 176.4 721.5 174.9 720.5 173.9 719.5 173.3 717.4 171.4 715.3 169.5 713.3 167.8 711.2 166.2 709.2 164.7 707.1 163.2 705.0 161.9 703.0 160.6 701.9 160.0 700.9 159.7 692.6 166.5 691.6 166.1 646.1 139.7C643.9 138.4 646.5 136.9 648.7 138.2L696.3 165.9 697.3 166.2 703.5 161.1 704.5 160.7 706.6 161.9 708.7 163.2 710.7 164.6 712.8 166.0 714.9 167.6 715.9 168.3 723.1 172.5 724.2 173.5 725.2 175.0 726.2 176.8 727.3 178.9 728.3 180.5 729.3 181.8 730.4 183.2 731.4 184.6 732.4 186.3 733.5 187.5 761.3 203.7C763.6 205.0 766.2 203.6 764.0 202.2L735.0 185.4 734.0 184.7 733.0 183.4 731.9 181.8 730.9 179.8 728.8 175.8 727.8 174.0 726.8 172.6 725.7 171.6 708.2 161.4 707.1 161.1 706.1 162.5 702.0 165.9 700.9 165.6 651.4 136.8C649.1 135.5 651.7 134.0 654.0 135.3L705.6 165.4 706.6 165.6 709.7 163.0 710.8 162.6 713.9 164.5 715.9 165.8 718.0 167.2 720.1 168.8 722.1 170.4 724.2 172.1 726.3 173.9 728.3 175.9 729.4 176.9 730.4 178.0 731.4 179.2 734.5 181.8 735.6 182.6 736.6 183.4 766.6 200.8C768.8 202.1 771.4 200.7 769.2 199.3L733.0 178.3 732.0 177.1 731.0 176.1 729.9 175.1 727.9 173.3 725.8 171.6 723.7 170.0 721.7 168.6 719.6 167.1 717.5 165.8 714.4 163.9 713.4 163.6 711.3 165.3 710.3 165.1 656.6 133.9C654.3 132.6 656.9 131.1 659.2 132.4L715.0 164.9 716.0 165.0 717.0 164.6 720.1 166.5 723.2 168.4 726.3 170.4 728.4 171.8 730.5 173.3 732.5 174.9 733.6 175.7 771.8 197.9C774.0 199.2 776.6 197.8 774.4 196.4L661.8 131.0C659.5 129.7 662.2 128.2 664.4 129.5L777.0 195.0" fill="none" stroke="#101010" stroke-width="0.9" stroke-linejoin="round"/>
<path d="M611.5 154.5L637 174M612.8 153.6L638 173" stroke="#111" stroke-width="0.9" fill="none"/>
<path d="M673.2 152.5 L673.2 118.2 L675.4 114.7 L681.6 112.9 L685.9 116.4 L691.4 116.4 L695.8 121.7 L700.1 123.5 L705.2 128.7 L709.6 134.0 L709.6 165.6M676.7 153.0 L676.7 119.9 L678.5 117.0 L683.6 115.5 L687.2 118.4 L691.7 118.4 L695.2 122.7 L698.8 124.2 L703.0 128.5 L706.6 132.8 L706.6 164.5M680.2 153.5 L680.2 123.0 L681.6 120.7 L685.7 119.5 L688.5 121.8 L692.1 121.8 L695.0 125.3 L697.8 126.4 L701.1 129.8 L704.0 133.3 L704.0 163.0M711.8 163.0 L711.8 140.9 L713.9 137.5 L719.8 135.8 L723.9 139.1 L729.1 139.1 L733.3 144.2 L737.5 145.9 L742.3 150.9 L746.5 155.9 L746.5 180.6M714.0 163.5 L714.0 142.4 L715.8 139.5 L721.0 138.0 L724.6 140.9 L729.2 140.9 L732.8 145.3 L736.5 146.9 L740.8 151.2 L744.4 155.6 L744.4 180.0M716.4 164.0 L716.4 145.2 L717.9 142.8 L722.2 141.5 L725.3 143.9 L729.1 143.9 L732.1 147.6 L735.2 148.9 L738.8 152.5 L741.8 156.2 L741.8 179.0" fill="none" stroke="#141414" stroke-width="0.95" stroke-linejoin="round"/>
<path d="M778.3 148L778.3 193Q778.2 194.8 776.6 195" stroke="#333" stroke-width="1.1" fill="none"/>
<g stroke="#1a1ae6" fill="#1a1ae6" stroke-width="1">
<path d="M662.4 157.0L661.8 122" fill="none"/>
<path d="M661.8 117.8L659.2 124.4L664.4 124.4Z" stroke="none"/>
<path d="M662.4 157.0L690.8 139.8" fill="none"/>
<path d="M694.9 137.4L688.2 138.2L690.6 142.6Z" stroke="none"/>
<path d="M662.4 157.0L633 140.6" fill="none" stroke-dasharray="3 2" stroke-opacity="0.7"/>
<path d="M628.7 138.2L635.4 138.6L633 143Z" stroke="none"/>
</g>
<text x="654.6" y="112.4" style="font-family:'Liberation Sans',sans-serif;font-size:9.2px;font-weight:normal;fill:#3a3ae0">Z+</text>
<text x="615.6" y="135.6" style="font-family:'Liberation Sans',sans-serif;font-size:9.2px;font-weight:normal;fill:#3a3ae0">Y+</text>
<text x="696.4" y="135.8" style="font-family:'Liberation Sans',sans-serif;font-size:9.2px;font-weight:normal;fill:#3a3ae0">X+</text>
</svg>
</body></html>
